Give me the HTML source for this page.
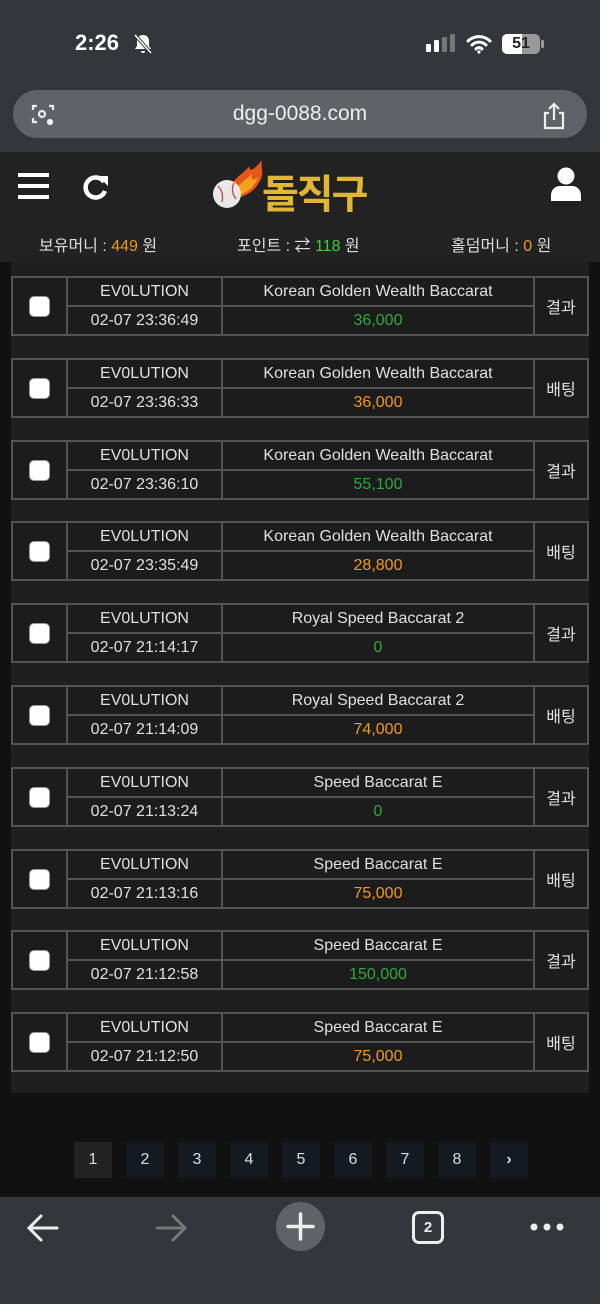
<!DOCTYPE html><html><head><meta charset="utf-8"><style>
*{margin:0;padding:0;box-sizing:border-box}
body{width:600px;height:1304px;background:#111;font-family:"Liberation Sans","Noto Sans CJK KR",sans-serif;color:#ddd;position:relative;overflow:hidden}
.abs{position:absolute}
.top{left:0;top:0;width:600px;height:152px;background:#33363a}
.url{left:13px;top:90px;width:574px;height:48px;border-radius:24px;background:#5f6367;color:#eee;font-size:21px;text-align:center;line-height:48px}
.hdr{left:0;top:152px;width:600px;height:110px;background:#222}
.panel{left:11px;top:262px;width:578px;height:831px;background:#1f1f1f}
table{position:absolute;left:11px;width:578px;border-collapse:collapse;background:#1c1c1c}
td{border:2px solid #545454;height:29px;text-align:center;font-size:16px;color:#e0e0e0;padding:0}
.cb{width:21px;height:21px;background:#fff;border:1px solid #999;border-radius:5px;margin:auto}
.g{color:#2eaa3a}.o{color:#f39a1a}
.pg{top:1142px;width:38px;height:36px;background:#151a20;color:#ddd;font-size:16px;text-align:center;line-height:36px}
.bot{left:0;top:1197px;width:600px;height:107px;background:#33363a}
</style></head><body>
<div class="abs top"></div>
<div class="abs" style="left:75px;top:30px;font-size:22px;color:#fff;font-weight:bold">2:26</div>
<svg class="abs" style="left:133px;top:33px" width="20" height="22" viewBox="0 0 20 22" fill="#fff"><path d="M10 2c-4 0-6 3-6 6v5l-2 3h16l-2-3V8c0-3-2-6-6-6zM8 18h4a2 2 0 0 1-4 0z"/><path d="M2 2l16 18" stroke="#33363a" stroke-width="3.5"/><path d="M2 2l16 18" stroke="#fff" stroke-width="1.5"/></svg>
<div class="abs" style="left:426px;top:44px;width:5px;height:8px;background:#fff;border-radius:1px"></div>
<div class="abs" style="left:434px;top:40px;width:5px;height:12px;background:#fff;border-radius:1px"></div>
<div class="abs" style="left:442px;top:37px;width:5px;height:15px;background:#777;border-radius:1px"></div>
<div class="abs" style="left:450px;top:34px;width:5px;height:18px;background:#777;border-radius:1px"></div>
<svg class="abs" style="left:466px;top:34px" width="26" height="20" viewBox="0 0 26 20"><path d="M2 7a16 16 0 0 1 22 0M6 11a10 10 0 0 1 14 0M10 15a4 4 0 0 1 6 0" stroke="#fff" stroke-width="3" fill="none" stroke-linecap="round"/><circle cx="13" cy="18" r="1.6" fill="#fff"/></svg>
<div class="abs" style="left:502px;top:34px;width:38px;height:20px;border-radius:5px;background:#999;overflow:hidden"><div style="width:20px;height:20px;background:#fff"></div></div>
<div class="abs" style="left:502px;top:34px;width:38px;height:20px;font-size:16px;font-weight:bold;color:#222;text-align:center;line-height:20px">51</div>
<div class="abs" style="left:541px;top:40px;width:3px;height:8px;background:#999;border-radius:1px"></div>
<div class="abs url">dgg-0088.com</div>
<svg class="abs" style="left:30px;top:101px" width="26" height="26" viewBox="0 0 26 26" fill="none" stroke="#eee" stroke-width="2.2"><path d="M3 9V5h4M19 5h4v4M3 17v4h4"/><circle cx="12" cy="13" r="3"/><circle cx="20" cy="21" r="2" fill="#eee"/></svg>
<svg class="abs" style="left:542px;top:102px" width="24" height="28" viewBox="0 0 24 28" fill="none" stroke="#eee" stroke-width="2.2"><path d="M12 2v16M7 7l5-5 5 5M7 11H3v15h18V11h-4"/></svg>
<div class="abs hdr"></div>
<svg class="abs" style="left:18px;top:173px" width="32" height="27"><rect y="0" width="31" height="4" fill="#fff"/><rect y="11" width="31" height="4" fill="#fff"/><rect y="22" width="31" height="4" fill="#fff"/></svg>
<svg class="abs" style="left:82px;top:173px" width="28" height="28" viewBox="0 0 28 28"><path d="M22 9A10 10 0 1 0 23 18" stroke="#fff" stroke-width="4.5" fill="none"/><path d="M16 3h10v10z" fill="#fff"/></svg>
<svg class="abs" style="left:210px;top:156px" width="60" height="56" viewBox="0 0 60 56"><path d="M16 40C20 25 30 20 40 10 38 18 46 12 52 4 50 14 56 16 48 28 44 36 34 40 24 44z" fill="#e8571a"/><path d="M22 38C28 28 34 26 42 18 40 26 46 24 48 20 46 30 38 36 28 40z" fill="#f5a21f"/><circle cx="17" cy="38" r="14" fill="#e8e8e8"/><path d="M8 30q6 6 4 16M24 27q-4 8 2 16" stroke="#c33" stroke-width="1.2" fill="none"/></svg>
<div class="abs" style="left:262px;top:162px;font-size:40px;font-weight:bold;color:#e2b534;letter-spacing:-2px">돌직구</div>
<svg class="abs" style="left:550px;top:167px" width="32" height="34" viewBox="0 0 32 34"><circle cx="16" cy="9" r="8.5" fill="#fff"/><path d="M1 34v-6a9 9 0 0 1 9-9h12a9 9 0 0 1 9 9v6z" fill="#fff"/></svg>
<div class="abs" style="left:39px;top:232px;font-size:16px;color:#ddd">보유머니 : <span class="o">449</span> 원</div>
<div class="abs" style="left:237px;top:232px;font-size:16px;color:#ddd">포인트 : ⇄ <span style="color:#3ed03e">118</span> 원</div>
<div class="abs" style="left:451px;top:232px;font-size:16px;color:#ddd">홀덤머니 : <span class="o">0</span> 원</div>
<div class="abs panel"></div>
<div id="list"></div>
<script>
var d=[["Korean Golden Wealth Baccarat","23:36:49","36,000","g","결과"],["Korean Golden Wealth Baccarat","23:36:33","36,000","o","배팅"],["Korean Golden Wealth Baccarat","23:36:10","55,100","g","결과"],["Korean Golden Wealth Baccarat","23:35:49","28,800","o","배팅"],["Royal Speed Baccarat 2","21:14:17","0","g","결과"],["Royal Speed Baccarat 2","21:14:09","74,000","o","배팅"],["Speed Baccarat E","21:13:24","0","g","결과"],["Speed Baccarat E","21:13:16","75,000","o","배팅"],["Speed Baccarat E","21:12:58","150,000","g","결과"],["Speed Baccarat E","21:12:50","75,000","o","배팅"]];
var h="";d.forEach(function(r,i){var t=Math.round(276+i*81.8);h+='<table style="top:'+t+'px"><tr><td rowspan=2 style="width:55px"><div class="cb"></div></td><td style="width:155px">EV0LUTION</td><td style="width:312px">'+r[0]+'</td><td rowspan=2>'+r[4]+'</td></tr><tr><td>02-07 '+r[1]+'</td><td class="'+r[3]+'">'+r[2]+'</td></tr></table>';});
for(var i=0;i<9;i++){h+='<div class="abs pg" style="left:'+(74+i*52)+'px;'+(i==0?'background:#222':'')+'">'+(i<8?i+1:'<b>›</b>')+'</div>';}
document.getElementById('list').innerHTML=h;
</script>
<div class="abs bot"></div>
<svg class="abs" style="left:26px;top:1213px" width="34" height="30" viewBox="0 0 34 30" fill="none" stroke="#eee" stroke-width="3" stroke-linecap="round"><path d="M31 15H4M15 3L3 15l12 12"/></svg>
<svg class="abs" style="left:154px;top:1213px" width="34" height="30" viewBox="0 0 34 30" fill="none" stroke="#777" stroke-width="3" stroke-linecap="round"><path d="M3 15h27M19 3l12 12-12 12"/></svg>
<div class="abs" style="left:276px;top:1202px;width:49px;height:49px;border-radius:50%;background:#5f6367"></div>
<svg class="abs" style="left:286px;top:1212px" width="29" height="29"><path d="M14.5 2v25M2 14.5h25" stroke="#eee" stroke-width="3.5" stroke-linecap="round"/></svg>
<div class="abs" style="left:412px;top:1211px;width:32px;height:33px;border:3px solid #eee;border-radius:7px;color:#eee;font-size:15px;font-weight:bold;text-align:center;line-height:27px">2</div>
<svg class="abs" style="left:530px;top:1222px" width="40" height="10"><circle cx="4" cy="5" r="3.5" fill="#eee"/><circle cx="17" cy="5" r="3.5" fill="#eee"/><circle cx="30" cy="5" r="3.5" fill="#eee"/></svg>
</body></html>
